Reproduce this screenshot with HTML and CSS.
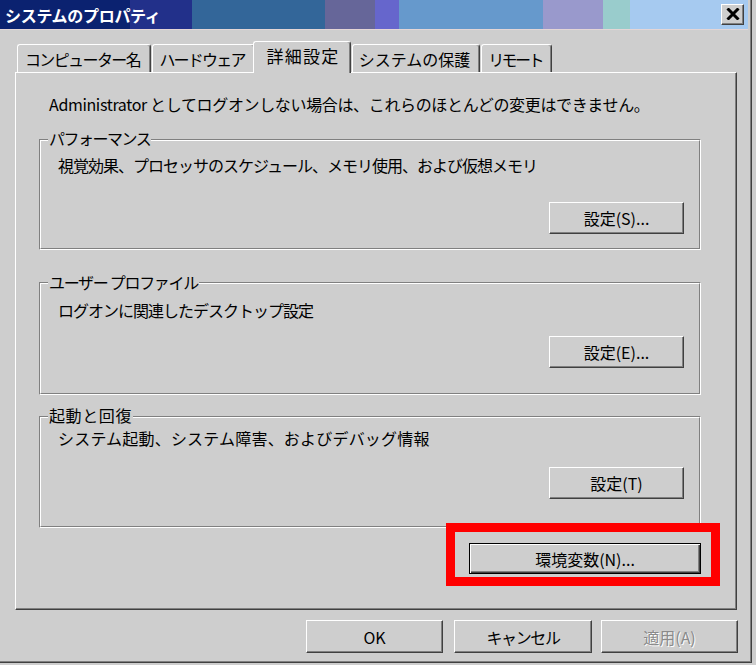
FILE: index.html
```html
<!DOCTYPE html>
<html lang="ja">
<head>
<meta charset="utf-8">
<title>システムのプロパティ</title>
<link rel="stylesheet" href="styles.css">
</head>
<body>
<div class="window">
  <div class="titlebar">
    <span class="title">システムのプロパティ</span>
    <button class="close" aria-label="閉じる">
      <svg width="14" height="12" viewBox="0 0 14 12"><path d="M1.5 0.5 L12.5 11.5 M12.5 0.5 L1.5 11.5" stroke="#000" stroke-width="3" fill="none"/></svg>
    </button>
  </div>
  <div class="content">
    <div class="tabs">
      <div class="tab t1">コンピューター名</div>
      <div class="tab t2">ハードウェア</div>
      <div class="tab t3 active">詳細設定</div>
      <div class="tab t4">システムの保護</div>
      <div class="tab t5">リモート</div>
    </div>
    <div class="panel">
      <p class="note">Administrator としてログオンしない場合は、これらのほとんどの変更はできません。</p>
      <div class="group g1">
        <div class="group-in">
          <div class="legend">パフォーマンス</div>
          <p class="desc">視覚効果、プロセッサのスケジュール、メモリ使用、および仮想メモリ</p>
          <div class="btn-row"><button class="btn">設定(S)...</button></div>
        </div>
      </div>
      <div class="group g2">
        <div class="group-in">
          <div class="legend">ユーザー プロファイル</div>
          <p class="desc">ログオンに関連したデスクトップ設定</p>
          <div class="btn-row"><button class="btn">設定(E)...</button></div>
        </div>
      </div>
      <div class="group g3">
        <div class="group-in">
          <div class="legend">起動と回復</div>
          <p class="desc">システム起動、システム障害、およびデバッグ情報</p>
          <div class="btn-row"><button class="btn">設定(T)</button></div>
        </div>
      </div>
      <div class="env-row">
        <div class="env-wrap">
          <button class="btn btn-default env">環境変数(N)...</button>
          <span class="highlight"></span>
        </div>
      </div>
    </div>
    <div class="footer">
      <button class="btn fbtn ok">OK</button>
      <button class="btn fbtn cancel">キャンセル</button>
      <button class="btn fbtn apply" disabled>適用(A)</button>
    </div>
  </div>
</div>
</body>
</html>
```
FILE: styles.css
```css
* { box-sizing: border-box; }

html, body {
  margin: 0;
  background: #cecece;
}

body {
  font-family: "Noto Sans CJK JP", "Liberation Sans", sans-serif;
  font-size: 16px;
  color: #000;
}

.window {
  width: 752px;
  height: 663px;
  background: #cecece;
  border-right: 1px solid #404040;
  border-bottom: 1px solid #404040;
  padding-right: 3px;
  box-shadow: inset -1px -1px 0 #808080;
  display: flex;
  flex-direction: column;
}

.titlebar {
  height: 30px;
  display: flex;
  align-items: center;
  padding: 0 4px 1px 5px;
  border-bottom: 1px solid #e4d6d6;
  background: linear-gradient(to right,
    #0b2270 0 130px,
    #22308a 130px 192px,
    #336699 192px 325px,
    #666699 325px 375px,
    #6666cc 375px 399px,
    #6699cc 399px 543px,
    #9999cc 543px 603px,
    #99cccc 603px 630px,
    #a6caf0 630px);
}

.title {
  flex: 1;
  color: #fff;
  font-weight: bold;
  font-size: 16px;
  line-height: 20px;
  padding-top: 2px;
  white-space: nowrap;
  letter-spacing: -0.3px;
}

.close {
  width: 23px;
  height: 21px;
  padding: 0;
  margin: 0;
  background: #cecece;
  border: 1px solid;
  border-color: #fff #404040 #404040 #fff;
  box-shadow: inset -1px -1px 0 #808080;
  display: flex;
  align-items: center;
  justify-content: center;
}

.content {
  padding: 11px 0 0 15px;
}

.tabs {
  display: flex;
  align-items: flex-end;
  margin-left: 2px;
}

.tab {
  height: 28px;
  background: #cecece;
  border-top: 1px solid #fff;
  border-left: 1px solid #fff;
  border-right: 1px solid #404040;
  box-shadow: inset -1px 0 0 #808080;
  border-radius: 3px 3px 0 0;
  display: flex;
  align-items: center;
  justify-content: center;
  padding-right: 3px;
  line-height: 20px;
  white-space: nowrap;
}

.t1 { width: 134px; letter-spacing: -1.6px; }
.t2 { width: 103px; margin-left: 1px; letter-spacing: -1.8px; }
.t3 { width: 98px; margin-left: -2px; font-size: 17px; letter-spacing: 1.2px; }
.t4 { width: 128px; margin-left: 1px; }
.t5 { width: 71px; margin-left: 1px; letter-spacing: -2.6px; }

.tab.active {
  height: 32px;
  margin-bottom: -1px;
  padding: 0 0 4px 2px;
  position: relative;
  z-index: 1;
}

.panel {
  width: 722px;
  height: 538px;
  border: 1px solid;
  border-color: #fff #404040 #404040 #fff;
  box-shadow: inset -1px -1px 0 #808080;
  padding: 21px 35px 0 23px;
}

.note {
  margin: 0 0 0 10px;
  line-height: 20px;
  white-space: nowrap;
  letter-spacing: -0.35px;
}

.group {
  border: 1px solid;
  border-color: #808080 #fff #fff #808080;
}

.group-in {
  border: 1px solid;
  border-color: #fff #808080 #808080 #fff;
  display: flex;
  flex-direction: column;
  padding: 0 15px 14px 0;
}

.legend {
  align-self: flex-start;
  margin: -13px 0 0 7px;
  padding: 0 1px;
  background: #cecece;
  line-height: 20px;
  white-space: nowrap;
}

.desc {
  margin: 7px 0 0 17px;
  line-height: 20px;
  white-space: nowrap;
}

.btn-row {
  display: flex;
  justify-content: flex-end;
  margin-top: 27px;
}

.g1 { margin-top: 25px; }
.g1 .legend { letter-spacing: -1.5px; }
.g1 .desc { letter-spacing: -1px; }

.g2 { margin-top: 32px; }
.g2 .legend { margin-top: -12px; letter-spacing: -1.3px; }
.g2 .desc { margin-top: 8px; letter-spacing: -1px; }
.g2 .btn-row { margin-top: 16px; }
.g2 .group-in { padding-bottom: 25px; }

.g3 { margin-top: 21px; }
.g3 .legend { margin-top: -13px; letter-spacing: 0.6px; }
.g3 .desc { margin-top: 3px; letter-spacing: 0.2px; }
.g3 .btn-row { margin-top: 19px; }
.g3 .group-in { padding-bottom: 27px; }

.btn {
  width: 135px;
  height: 32px;
  margin: 0;
  padding: 0;
  font-family: inherit;
  font-size: 16px;
  line-height: 20px;
  color: #000;
  background: #cecece;
  border: 1px solid;
  border-color: #fff #404040 #404040 #fff;
  box-shadow: inset -1px -1px 0 #808080;
  white-space: nowrap;
}

.env-row {
  display: flex;
  justify-content: flex-end;
  margin-top: 15px;
}

.env-wrap {
  position: relative;
}

.btn-default {
  border: 1px solid #000;
  box-shadow: inset 1px 1px 0 #fff, inset -1px -1px 0 #404040, inset -2px -2px 0 #808080;
}

.env {
  width: 232px;
  height: 31px;
}

.highlight {
  position: absolute;
  left: -23px;
  top: -20px;
  right: -19px;
  bottom: -12px;
  border: 9px solid #ff0000;
  pointer-events: none;
}

.footer {
  display: flex;
  margin: 10px 0 0 291px;
}

.fbtn {
  width: 137px;
  height: 33px;
}

.cancel { width: 138px; margin-left: 11px; letter-spacing: -1.4px; }
.apply { margin-left: 9px; }

.apply:disabled {
  color: #8a8a8a;
  text-shadow: 1px 1px 0 #fff;
}
```
